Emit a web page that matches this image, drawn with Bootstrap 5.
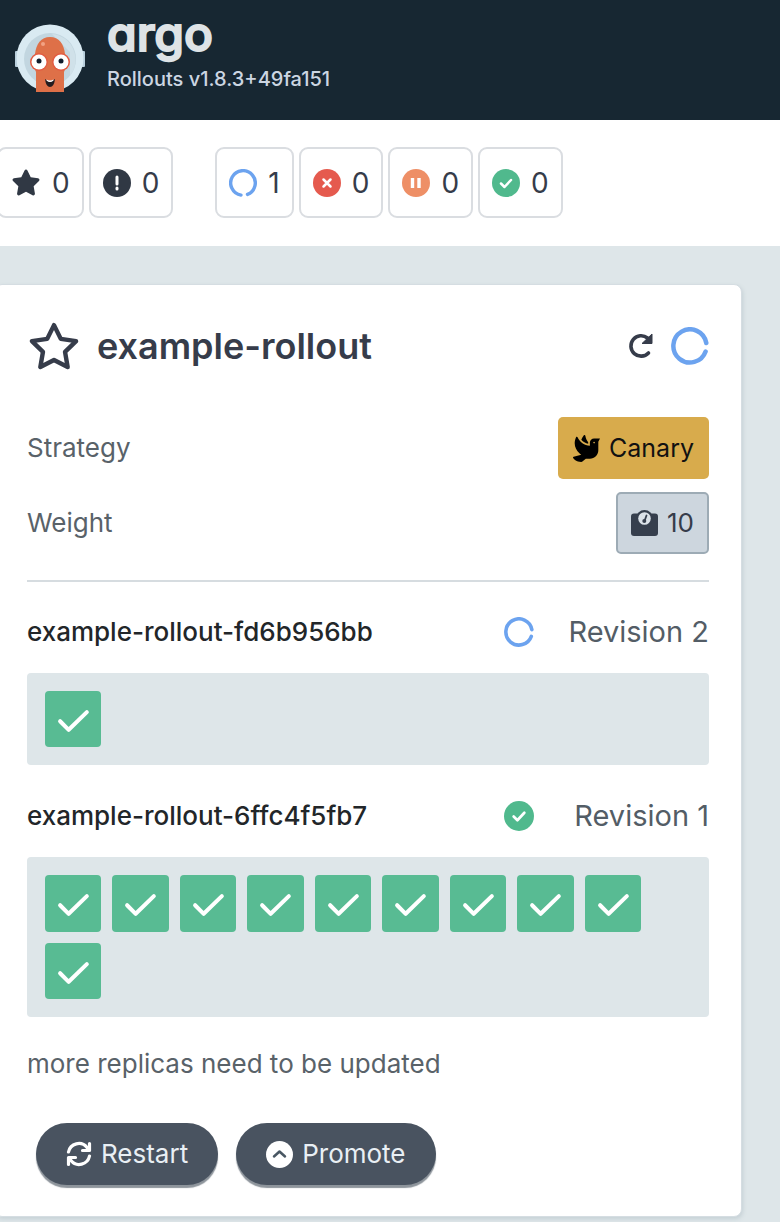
<!DOCTYPE html>
<html lang="en">
<head>
<meta charset="utf-8">
<meta name="viewport" content="width=device-width, initial-scale=1">
<title>Argo Rollouts</title>
<link rel="stylesheet" href="https://cdn.jsdelivr.net/npm/bootstrap@5.3.0/dist/css/bootstrap.min.css">
<style>
  :root { --ink: #363c4a; --slate: #495360; --mist: #dee6e9; --ok: #58bb93; --run: #6ca3ef; }
  body { font-family: Inter, "Liberation Sans", sans-serif; font-size: 26px; line-height: 32px; background: var(--mist); color: #596269; overflow-x: hidden; }
  svg { display: block; flex: none; }
  .topbar { background: #172732; height: 120px; padding: 0 0 4px 14px; gap: 21px; }
  .wordmark { font-size: 48px; line-height: 48px; font-weight: 500; color: #dee3e6; font-feature-settings: "cv11"; -webkit-text-stroke: 2px #dee3e6; stroke-linejoin: round; }
  .version { font-size: 20px; line-height: 24px; font-weight: 500; color: #ccd6e2; margin: 9px 0 16px; }
  .toolbar { padding: 27px 0 28px; margin-left: -3px; gap: 5px; }
  .stat { height: 71px; padding: 0 12px; gap: 11px; border: 2px solid #dadde1; border-radius: 9px; background: #fff; color: var(--ink); font-size: 28px; }
  .stat-gap { margin-left: 37px; }
  .rollout { margin: 38px 38px 6px -6px; padding: 31px 32px; border: 1px solid #d5dde2; border-radius: 8px; background: #fff; box-shadow: 1px 2px 4px #c5d0d5; }
  .rollout-name { font-size: 36px; line-height: 60px; font-weight: 600; color: var(--ink); }
  .bare { border: 0; background: none; padding: 0; color: var(--ink); }
  .facts { margin: 41px 0 26px; gap: 13px; }
  .tag { height: 62px; padding: 0 15px; gap: 9px; border-radius: 5px; }
  .tag-canary { background: #d8ab4c; color: #111; font-size: 25px; }
  .tag-weight { background: #cdd6de; color: var(--ink); border: 2px solid #9dabb5; padding: 0 13px; }
  .divider { border-top: 2px solid #d6dce0; margin-bottom: 30px; }
  .rev-name { color: #222629; font-weight: 500; line-height: 40px; }
  .rev-label { font-size: 29px; color: #535d66; width: 151px; }
  .replicas { display: grid; grid-template-columns: repeat(auto-fill, minmax(56px, 1fr)); gap: 11px; padding: 18px 68px 18px 18px; margin: 21px 0 31px; background: var(--mist); border-radius: 4px; }
  .replica { aspect-ratio: 1; background: var(--ok); border-radius: 4px; }
  .actions { margin: 43px 0 0 9px; gap: 18px; }
  .action { height: 62px; padding: 0 30px; gap: 9px; border: 0; border-radius: 31px; background: var(--slate); color: #e9eff4; box-shadow: 0 3px 1px #8d949b; }
</style>
</head>
<body>
<svg width="0" height="0" class="position-absolute" aria-hidden="true">
  <symbol id="star" viewBox="-10 -20 596 572"><path d="M259.3 17.8L194 150.2 47.9 171.5c-26.2 3.8-36.7 36.1-17.7 54.6l105.700 103-25 145.500c-4.500 26.300 23.200 46 46.400 33.700L288 439.600l130.700 68.700c23.200 12.200 50.900-7.400 46.400-33.700l-25-145.500 105.700-103c19-18.500 8.500-50.800-17.700-54.600L382 150.200 316.700 17.800c-11.700-23.600-45.600-23.900-57.400 0z"/></symbol>
  <symbol id="tick" viewBox="0 0 56 56"><path d="M15 30l8.500 8.500L41.500 21" fill="none" stroke="#fff" stroke-width="4" stroke-linecap="round" stroke-linejoin="round"/></symbol>
  <symbol id="healthy" viewBox="0 0 28 28"><circle cx="14" cy="14" r="14" fill="#50b98d"/><path d="M9 14.500l3.500 3.500 6.500-7" fill="none" stroke="#fff" stroke-width="2.500" stroke-linecap="round" stroke-linejoin="round"/></symbol>
  <symbol id="ring" viewBox="0 0 38 38"><path d="M35.300 16A16.600 16.600 0 1 0 34.600 24.500" fill="none" stroke="#6ca3ef" stroke-width="4.500" stroke-linecap="round"/></symbol>
</svg>

<header class="topbar d-flex align-items-center">
  <svg width="72" height="72" viewBox="0 0 72 72" role="img" aria-label="Argo mascot">
    <rect x="1" y="29" width="70" height="16" rx="1" fill="#b9cfdc"/>
    <circle cx="36" cy="36" r="33.500" fill="#d9eaf2"/>
    <circle cx="36" cy="37" r="26" fill="#c2d6e0"/>
    <path d="M38 12a26 26 0 0 1 18 42V30z" fill="#d0e1e9"/>
    <path d="M22 70V50l-4-10 3-8c1-10 6-17 15-17s14 7 15 17l3 8-4 10v20z" fill="#de7048"/>
    <circle cx="29" cy="22" r="2" fill="#f3a283"/>
    <circle cx="25" cy="40" r="9" fill="#e35c42"/><circle cx="47" cy="40" r="9" fill="#e35c42"/>
    <circle cx="25" cy="40" r="7.500" fill="#fff"/><circle cx="47" cy="40" r="7.500" fill="#fff"/>
    <circle cx="25" cy="39" r="2.500" fill="#101d2d"/><circle cx="47" cy="39" r="2.500" fill="#101d2d"/>
    <path d="M31 57q5 4 10 0-1 8-5 8t-5-8z" fill="#231d20"/><path d="M32.500 57.500q3.500 2 7 0v1q-3.500 3-7 0z" fill="#fff"/>
  </svg>
  <div>
    <div class="wordmark">argo</div>
    <div class="version">Rollouts v1.8.3+49fa151</div>
  </div>
</header>

<div class="bg-white">
  <div class="toolbar d-flex">
    <button class="stat d-flex align-items-center" aria-label="Favorites"><svg width="30" height="30" fill="#303844"><use href="#star"/></svg>0</button>
    <button class="stat d-flex align-items-center" aria-label="Needs attention"><svg width="28" height="28" viewBox="0 0 28 28"><circle cx="14" cy="14" r="14" fill="#303844"/><path d="M14 8v7M14 19v1" stroke="#fff" stroke-width="3" stroke-linecap="round"/></svg>0</button>
    <button class="stat stat-gap d-flex align-items-center" aria-label="Progressing"><svg width="28" height="28" viewBox="0 0 28 28"><path d="M12 26.100A12.300 12.300 0 1 1 18.500 25.400" fill="none" stroke="#6ca3ef" stroke-width="3.400" stroke-linecap="round"/></svg>1</button>
    <button class="stat d-flex align-items-center" aria-label="Degraded"><svg width="28" height="28" viewBox="0 0 28 28"><circle cx="14" cy="14" r="14" fill="#e55a4e"/><path d="M10.500 10.500l7 7m0-7l-7 7" stroke="#fff" stroke-width="2.500" stroke-linecap="round"/></svg>0</button>
    <button class="stat d-flex align-items-center" aria-label="Paused"><svg width="28" height="28" viewBox="0 0 28 28"><circle cx="14" cy="14" r="14" fill="#ee8f66"/><path d="M10.500 9v10m6.500-10v10" stroke="#fff" stroke-width="3.400"/></svg>0</button>
    <button class="stat d-flex align-items-center" aria-label="Healthy"><svg width="28" height="28"><use href="#healthy"/></svg>0</button>
  </div>
</div>

<main class="rollout">
  <div class="d-flex align-items-center">
    <button class="bare" aria-label="Favorite"><svg width="54" height="54" viewBox="-30 -40 636 612" fill="none" stroke="#363c4a" stroke-width="52" stroke-linejoin="round"><path d="M288 20l80 162 180 26-130 127 31 179-161-84-161 84 31-179L28 208l180-26z"/></svg></button>
    <h1 class="rollout-name mb-0 ms-3 flex-grow-1">example-rollout</h1>
    <button class="bare me-3" aria-label="Refresh"><svg width="28" height="28" viewBox="0 0 28 28"><path d="M21.500 21A10.200 10.200 0 1 1 20.500 6" fill="none" stroke="#363c4a" stroke-width="3.600" stroke-linecap="round"/><path d="M25 2v9.500h-10z" fill="#363c4a" stroke="#363c4a" stroke-linejoin="round"/></svg></button>
    <svg width="38" height="38"><use href="#ring"/></svg>
  </div>

  <div class="facts d-flex flex-column">
    <div class="d-flex align-items-center justify-content-between">
      <span>Strategy</span>
      <span class="tag tag-canary d-flex align-items-center"><svg width="27" height="27" viewBox="0 0 512 512"><path d="M288 167.200v-28.100c-28.200-36.300-47.100-79.300-54.100-125.200-2.100-13.500-19-18.800-27.800-8.300-21.100 24.900-37.700 54.100-48.900 86.500 34.200 38.300 80 64.600 130.800 75.100zM400 64c-44.200 0-80 35.900-80 80.100v59.400C215.600 197.300 127 133 87 41.800c-5.500-12.500-23.200-13.200-29-.9C41.400 76 32 115.200 32 156.600c0 70.800 34.100 136.900 85.100 185.900 13.200 12.700 26.100 23.200 38.900 32.800l-143.900 36C1.400 414-3.400 426.400 2.600 435.700 20 462.600 63 508.200 155.800 512c8 .3 16-2.600 22.100-7.900l65.200-56.100H320c88.400 0 160-71.500 160-159.900V128l32-64H400zm0 96.100c-8.800 0-16-7.200-16-16s7.200-16 16-16 16 7.200 16 16-7.200 16-16 16z"/></svg>Canary</span>
    </div>
    <div class="d-flex align-items-center justify-content-between">
      <span>Weight</span>
      <span class="tag tag-weight d-flex align-items-center"><svg width="27" height="27" viewBox="0 0 27 27"><path d="M3 3.500h21q3 0 3 3V23q0 3-3 3H3q-3 0-3-3V6.500q0-3 3-3z" fill="#363f4d"/><circle cx="13.500" cy="8.500" r="8.500" fill="#363f4d"/><circle cx="13.500" cy="8.500" r="6.300" fill="#dbe2e8"/><path d="M13.500 11l2-5.500" stroke="#363f4d" stroke-width="1.800" stroke-linecap="round"/><circle cx="13.300" cy="11" r="2" fill="#363f4d"/></svg>10</span>
    </div>
  </div>
  <div class="divider"></div>

  <section>
    <div class="d-flex align-items-center">
      <span class="rev-name flex-grow-1">example-rollout-fd6b956bb</span>
      <svg width="30" height="30"><use href="#ring"/></svg>
      <span class="rev-label text-end ms-4 text-nowrap flex-shrink-0">Revision 2</span>
    </div>
    <div class="replicas">
      <div class="replica"><svg class="w-100 h-100"><use href="#tick"/></svg></div>
    </div>
  </section>

  <section>
    <div class="d-flex align-items-center">
      <span class="rev-name flex-grow-1">example-rollout-6ffc4f5fb7</span>
      <svg width="30" height="30"><use href="#healthy"/></svg>
      <span class="rev-label text-end ms-4 text-nowrap flex-shrink-0">Revision 1</span>
    </div>
    <div class="replicas">
      <div class="replica"><svg class="w-100 h-100"><use href="#tick"/></svg></div>
      <div class="replica"><svg class="w-100 h-100"><use href="#tick"/></svg></div>
      <div class="replica"><svg class="w-100 h-100"><use href="#tick"/></svg></div>
      <div class="replica"><svg class="w-100 h-100"><use href="#tick"/></svg></div>
      <div class="replica"><svg class="w-100 h-100"><use href="#tick"/></svg></div>
      <div class="replica"><svg class="w-100 h-100"><use href="#tick"/></svg></div>
      <div class="replica"><svg class="w-100 h-100"><use href="#tick"/></svg></div>
      <div class="replica"><svg class="w-100 h-100"><use href="#tick"/></svg></div>
      <div class="replica"><svg class="w-100 h-100"><use href="#tick"/></svg></div>
      <div class="replica"><svg class="w-100 h-100"><use href="#tick"/></svg></div>
    </div>
  </section>

  <p class="mb-0">more replicas need to be updated</p>
  <div class="actions d-flex">
    <button class="action d-flex align-items-center"><svg width="26" height="26" viewBox="0 0 26 26" fill="none" stroke="#fff" stroke-width="3.200" stroke-linecap="round" stroke-linejoin="round"><path d="M2.500 11A10.500 10.500 0 0 1 21 6.500l2 2.500M23.500 2.500V9.500H16.500M23.500 15A10.500 10.500 0 0 1 5 19.500L3 17M2.500 23.500V16.500H9.500"/></svg>Restart</button>
    <button class="action d-flex align-items-center"><svg width="27" height="27" viewBox="0 0 27 27"><circle cx="13.500" cy="13.500" r="13.500" fill="#fff"/><path d="M8 15.500l5.500-5 5.500 5" fill="none" stroke="#495763" stroke-width="2.500" stroke-linecap="round" stroke-linejoin="round"/></svg>Promote</button>
  </div>
</main>
<script src="https://cdn.jsdelivr.net/npm/bootstrap@5.3.0/dist/js/bootstrap.bundle.min.js"></script>
</body>
</html>
